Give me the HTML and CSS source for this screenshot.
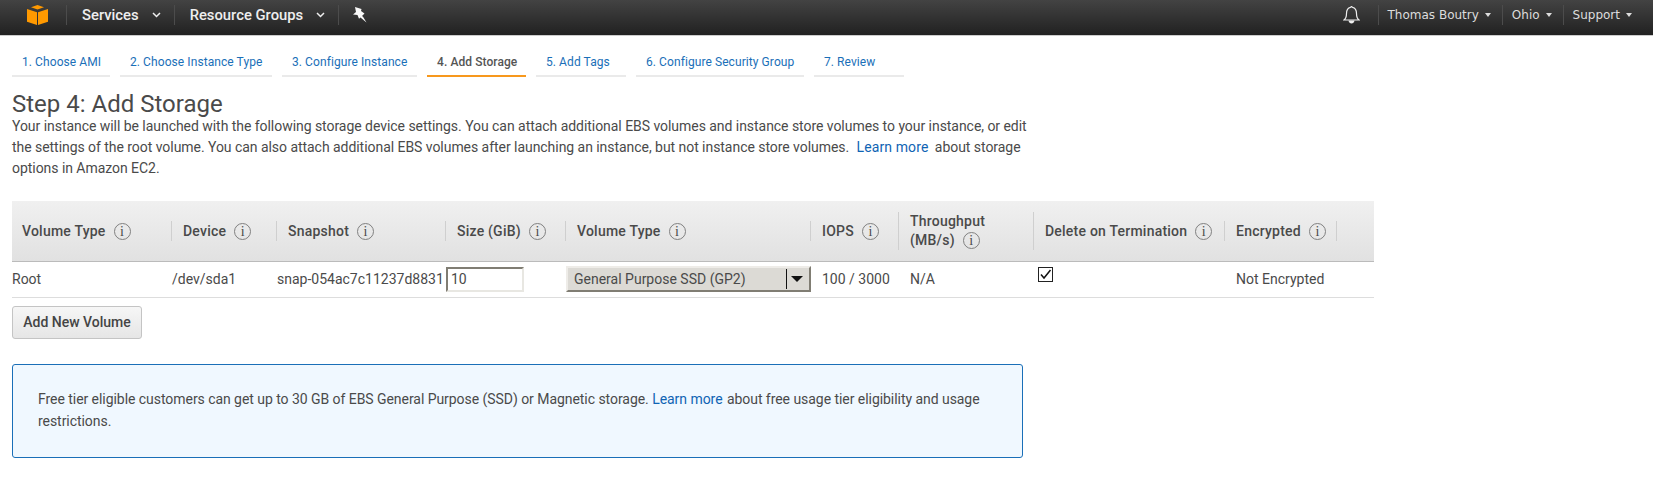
FILE: index.html
```html
<!DOCTYPE html>
<html>
	<head>
		<title>Step 4: Add Storage</title>
		<meta charset="UTF-8">
		<link rel="stylesheet" href="styles.css">
	</head>
	<body>
		<div class="topbar">
			<svg class="logo" width="21" height="20" viewBox="0 0 21 20">
				<path fill="#f90" d="M10.500 0l6.500 2.200-6.500 2.300L4 2.200z"/>
				<path fill="#f90" d="M0 4l10 3.300V20L0 16.800z"/>
				<path fill="#f90" d="M21 4L11 7.300V20l10-3.200z"/>
			</svg>
			<span class="sep"></span>
			<span class="nav-item">Services<svg class="chev" width="9" height="6" viewBox="0 0 9 6"><path d="M1 1l3.500 3.500L8 1" fill="none" stroke="#eee" stroke-width="1.500"/></svg></span>
			<span class="sep"></span>
			<span class="nav-item">Resource Groups<svg class="chev" width="9" height="6" viewBox="0 0 9 6"><path d="M1 1l3.500 3.500L8 1" fill="none" stroke="#eee" stroke-width="1.500"/></svg></span>
			<span class="sep"></span>
			<svg class="pin" width="14" height="16" viewBox="0 0 14 16"><path fill="#f8f8f8" d="M2 0l6.500 2-.5 2 3.500 2.500L9 9l1 .8 3.500 5.700-6-5-1.500 1.300-1.500-3.800L0 7.500 3 5z"/></svg>
			<span class="spacer"></span>
			<svg class="bell" width="17" height="18" viewBox="0 0 17 18"><path d="M1 14c2-1.500 2.500-3 2.500-6.500C3.500 4 5 1.800 7.500 1.300L8.500.5l1 .8c2.500.5 4 2.700 4 6.200 0 3.500.5 5 2.500 6.500z" fill="none" stroke="#eee" stroke-width="1.200"/><path d="M5.500 14.500c.3 2 1.500 3 3 3s2.700-1 3-3z" fill="#eee"/></svg>
			<span class="sep"></span>
			<span class="menu-item">Thomas Boutry<i class="caret"></i></span>
			<span class="sep"></span>
			<span class="menu-item">Ohio<i class="caret"></i></span>
			<span class="sep"></span>
			<span class="menu-item menu-support">Support<i class="caret"></i></span>
		</div>

		<div class="tabs">
			<a class="tab tab-1">1. Choose AMI</a>
			<a class="tab tab-2">2. Choose Instance Type</a>
			<a class="tab tab-3">3. Configure Instance</a>
			<a class="tab tab-4 active">4. Add Storage</a>
			<a class="tab tab-5">5. Add Tags</a>
			<a class="tab tab-6">6. Configure Security Group</a>
			<a class="tab tab-7">7. Review</a>
		</div>

		<div class="page">
			<h1>Step 4: Add Storage</h1>
			<p class="intro">Your instance will be launched with the following storage device settings. You can attach additional EBS volumes and instance store volumes to your instance, or edit the settings of the root volume. You can also attach additional EBS volumes after launching an instance, but not instance store volumes. <a>Learn more</a> about storage options in Amazon EC2.</p>

			<div class="grid grid-head">
				<div class="th">Volume Type<i class="info">i</i></div>
				<div class="th">Device<i class="info">i</i></div>
				<div class="th">Snapshot<i class="info">i</i></div>
				<div class="th">Size (GiB)<i class="info">i</i></div>
				<div class="th">Volume Type<i class="info">i</i></div>
				<div class="th th-tall">IOPS<i class="info">i</i></div>
				<div class="th th-tall th-stack">
					<div>Throughput</div>
					<div class="th-line">(MB/s)<i class="info">i</i></div>
				</div>
				<div class="th">Delete on Termination<i class="info">i</i></div>
				<div class="th">Encrypted<i class="info">i</i></div>
			</div>
			<div class="grid grid-row">
				<div class="td td-flush">Root</div>
				<div class="td td-flush">/dev/sda1</div>
				<div class="td td-flush">snap-054ac7c11237d8831</div>
				<div class="td td-flush"><span class="size-input">10</span></div>
				<div class="td td-flush">
					<div class="select">General Purpose SSD (GP2)<span class="select-arrow"></span></div>
				</div>
				<div class="td">100 / 3000</div>
				<div class="td">N/A</div>
				<div class="td td-check">
					<svg width="15" height="15" viewBox="0 0 15 15"><rect x=".5" y=".5" width="14" height="14" fill="#fff" stroke="#222"/><path d="M3 7.500l3 3.500L12.500 3" fill="none" stroke="#111" stroke-width="1.500"/></svg>
				</div>
				<div class="td">Not Encrypted</div>
			</div>

			<button class="add-btn">Add New Volume</button>

			<div class="notice">Free tier eligible customers can get up to 30 GB of EBS General Purpose (SSD) or Magnetic storage. <a>Learn more</a> about free usage tier eligibility and usage restrictions.</div>
		</div>
	</body>
</html>
```

FILE: styles.css
```css
html, body {
	box-sizing: border-box;
	margin: 0;
	padding: 0;
	height: 488px;
	overflow: hidden;
	background: #fff;
	font-family: 'Roboto', sans-serif;
	font-size: 14px;
	color: #4a4a4a;
}

a {
	color: #0f64b4;
	margin-right: 1px;
}

.topbar {
	display: flex;
	align-items: center;
	box-sizing: border-box;
	height: 36px;
	padding-bottom: 5px;
	background: linear-gradient(#434343, #212121);
	color: #eee;
	border-bottom: 1px solid #ccc;
}

.logo {
	margin-left: 27px;
	margin-right: 18px;
}

.sep {
	width: 1px;
	height: 20px;
	background: #4c4c4c;
}

.nav-item {
	display: flex;
	align-items: center;
	padding: 0 13px 0 15px;
	font-size: 14.800px;
	font-weight: 500;
	color: #eee;
}

.chev {
	margin-left: 13px;
}

.pin {
	margin-left: 14px;
}

.spacer {
	flex: 1;
}

.bell {
	margin-right: 18px;
}

.menu-item {
	display: flex;
	align-items: center;
	padding: 0 11px 0 9px;
	font-family: 'DejaVu Sans', sans-serif;
	font-size: 12px;
	color: #ddd;
}

.caret {
	margin-left: 6px;
	border-left: 3px solid transparent;
	border-right: 3px solid transparent;
	border-top: 4px solid #ddd;
}

.menu-support {
	padding-right: 21px;
}

.tabs {
	display: flex;
	gap: 10px;
	margin-left: 12px;
	padding-top: 18px;
}

.tab {
	display: block;
	box-sizing: border-box;
	height: 23px;
	padding: 0 10px;
	font-size: 12px;
	letter-spacing: .08px;
	line-height: 17px;
	margin: 0;
	color: #1a6fb8;
	border-bottom: 2px solid #eaeaea;
	white-space: nowrap;
}

.tab-1 { width: 98px; }
.tab-2 { width: 152px; }
.tab-3 { width: 135px; }
.tab-4 { width: 99px; }
.tab-5 { width: 90px; }
.tab-6 { width: 168px; }
.tab-7 { width: 90px; }

.tab.active {
	color: #555;
	font-weight: 500;
	border-bottom-color: #f7981d;
}

.page {
	padding-left: 12px;
}

h1 {
	margin: 15px 0 0;
	font-size: 24px;
	font-weight: 400;
	line-height: 24px;
	color: #4a4a4a;
}

.intro {
	width: 1035px;
	margin: 0;
	letter-spacing: -.045px;
	line-height: 21px;
}

.intro a {
	margin: 0 3px 0 4px;
	letter-spacing: .1px;
}

.grid {
	display: grid;
	grid-template-columns: 160px 105px 169px 120px 245px 88px 135px 191px 112px;
	width: 1362px;
}

.grid-head {
	box-sizing: border-box;
	height: 61px;
	margin-top: 22px;
	align-items: center;
	background: linear-gradient(#f0f0f0, #e1e1e1);
	border-bottom: 1px solid #bbb;
}

.th {
	display: flex;
	align-items: center;
	box-sizing: border-box;
	height: 20px;
	padding-left: 11px;
	font-weight: 500;
	letter-spacing: .22px;
	line-height: 19px;
	border-right: 1px solid #cfcfcf;
	white-space: nowrap;
}

.th:first-child {
	padding-left: 10px;
}

.th-tall {
	height: 38px;
}

.th-stack {
	display: block;
}

.th-line {
	display: flex;
	align-items: center;
}

.info {
	display: inline-block;
	box-sizing: border-box;
	width: 17px;
	height: 17px;
	margin-left: 8px;
	border: 1px solid #808080;
	border-radius: 50%;
	font-family: 'Liberation Serif', serif;
	font-style: normal;
	font-weight: 400;
	font-size: 14px;
	letter-spacing: 0;
	line-height: 15px;
	text-align: center;
}

.grid-row {
	height: 36px;
	box-sizing: border-box;
	padding-bottom: 1px;
	border-bottom: 1px solid #ddd;
}

.td {
	display: flex;
	align-items: center;
	padding-left: 11px;
	white-space: nowrap;
}

.td-flush {
	padding-left: 0;
}

.size-input {
	display: block;
	box-sizing: border-box;
	width: 78px;
	height: 25px;
	padding-left: 3px;
	line-height: 21px;
	border: 2px solid;
	border-color: #807d73 #e8e7e2 #e8e7e2 #807d73;
	background: #fff;
}

.select {
	display: flex;
	align-items: center;
	justify-content: space-between;
	box-sizing: border-box;
	width: 245px;
	height: 26px;
	padding-left: 6px;
	background: #dcdad5;
	border: 2px solid;
	border-color: #eeece8 #807d73 #807d73 #eeece8;
}

.select-arrow {
	position: relative;
	box-sizing: border-box;
	width: 23px;
	height: 20px;
	border-left: 1.500px solid #111;
}

.select-arrow::after {
	content: "";
	position: absolute;
	left: 4px;
	top: 7px;
	border-left: 6px solid transparent;
	border-right: 6px solid transparent;
	border-top: 6px solid #111;
}

.td-check {
	align-items: flex-start;
	padding: 5px 0 0 4px;
}

.add-btn {
	display: block;
	box-sizing: border-box;
	width: 130px;
	height: 33px;
	margin-top: 8px;
	padding: 0 0 2px;
	font-family: 'Roboto', sans-serif;
	font-size: 14px;
	font-weight: 500;
	color: #444;
	background: linear-gradient(#f6f6f6, #e6e6e6);
	border: 1px solid #c4c4c4;
	border-radius: 3px;
}

.notice {
	box-sizing: border-box;
	width: 1011px;
	height: 94px;
	margin-top: 25px;
	padding: 24px 25px;
	letter-spacing: -.05px;
	line-height: 21.500px;
	background: #f0f8ff;
	border: 1px solid #1a6fb8;
	border-radius: 3px;
}
```
